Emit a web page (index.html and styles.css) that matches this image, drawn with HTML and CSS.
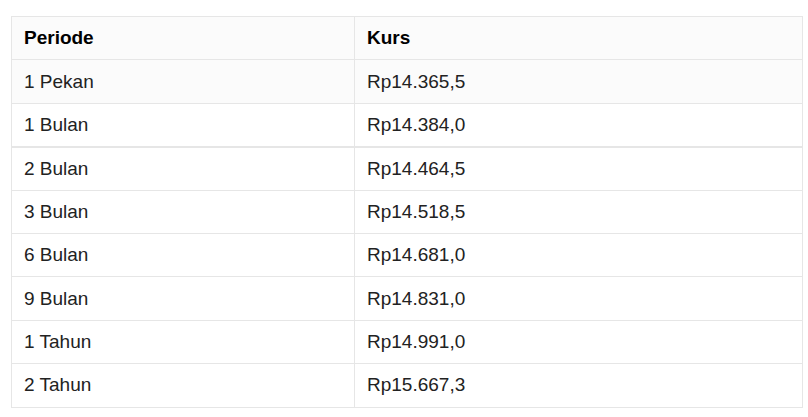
FILE: index.html
```html
<!DOCTYPE html>
<html>
<head>
<meta charset="utf-8">
<link rel="stylesheet" href="styles.css">
</head>
<body>
<table class="rates">
  <thead>
    <tr class="head"><th class="c1">Periode</th><th class="c2">Kurs</th></tr>
  </thead>
  <tbody>
    <tr class="shade"><td>1 Pekan</td><td>Rp14.365,5</td></tr>
    <tr class="split"><td>1 Bulan</td><td>Rp14.384,0</td></tr>
    <tr><td>2 Bulan</td><td>Rp14.464,5</td></tr>
    <tr><td>3 Bulan</td><td>Rp14.518,5</td></tr>
    <tr><td>6 Bulan</td><td>Rp14.681,0</td></tr>
    <tr><td>9 Bulan</td><td>Rp14.831,0</td></tr>
    <tr><td>1 Tahun</td><td>Rp14.991,0</td></tr>
    <tr><td>2 Tahun</td><td>Rp15.667,3</td></tr>
  </tbody>
</table>
</body>
</html>
```

FILE: styles.css
```css
html, body {
  margin: 0;
  padding: 0;
  background: #ffffff;
}
body {
  padding: 16px 0 0 11px;
  font-family: "Liberation Sans", Arial, sans-serif;
}
.rates {
  border-collapse: collapse;
  width: 792px;
  font-size: 19px;
  color: #222222;
}
.rates th, .rates td {
  border: 1px solid #e6e6e6;
  text-align: left;
  padding: 0 12px;
  height: 43.4px;
  box-sizing: border-box;
  line-height: 22px;
}
.rates th {
  font-weight: bold;
  color: #000000;
}
.c1 {
  width: 343px;
}
.head, .shade {
  background: #fbfbfb;
}
.split td {
  border-bottom: 2px solid #e6e6e6;
}
```
